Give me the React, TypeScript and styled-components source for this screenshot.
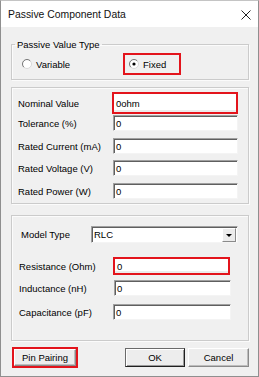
import styled, { createGlobalStyle } from 'styled-components';

const GlobalStyle = createGlobalStyle`
	html, body {
		margin: 0;
		padding: 0;
		background: #ffffff;
	}
	* {
		box-sizing: border-box;
	}
`;

const RED = '#e3141c';
const FONT = `'Liberation Sans', Arial, sans-serif`;

const Window = styled.div`
	width: 259px;
	height: 377px;
	display: flex;
	flex-direction: column;
	border: 1px solid #8f8f8f;
	border-top-color: #c4c4c4;
	font-family: ${FONT};
	font-size: 9.5px;
	color: #000;
	overflow: hidden;
`;

const TitleBar = styled.div`
	height: 26px;
	flex: none;
	display: flex;
	align-items: center;
	justify-content: space-between;
	padding: 0 7px 0 7px;
	background: #ffffff;
`;

const Title = styled.span`
	font-size: 10.4px;
	color: #111;
`;

const Close = styled.svg`
	width: 10px;
	height: 10px;
	margin-top: 1px;
`;

const Body = styled.div`
	flex: 1;
	display: flex;
	flex-direction: column;
	background: #f0f0f0;
	padding: 12px 9px 0 10px;
`;

const Group = styled.fieldset<{ $top?: number; $pad: string }>`
	margin: ${(p) => p.$top ?? 0}px 0 0 0;
	padding: ${(p) => p.$pad};
	min-inline-size: 0;
	border: 1px solid #cbcbcb;
	box-shadow: inset 1px 1px 0 #fbfbfb, 1px 1px 0 #fbfbfb;
`;

const Legend = styled.legend`
	margin-left: 3px;
	padding: 0 2px;
	line-height: 11px;
	height: 11px;
`;

const RadioRow = styled.div`
	display: flex;
	align-items: center;
	height: 22px;
`;

const Option = styled.label<{ $w: number; $flag?: boolean }>`
	display: flex;
	align-items: center;
	gap: 4px;
	width: ${(p) => p.$w}px;
	height: 22px;
	padding-left: ${(p) => (p.$flag ? 4 : 10)}px;
	border: ${(p) => (p.$flag ? `2px solid ${RED}` : 'none')};
`;

const Row = styled.div<{ $top?: number }>`
	display: flex;
	align-items: center;
	margin-top: ${(p) => p.$top ?? 0}px;
`;

const Label = styled.span<{ $w: number; $indent?: number }>`
	width: ${(p) => p.$w}px;
	padding-left: ${(p) => p.$indent ?? 0}px;
	flex: none;
	white-space: nowrap;
`;

const Field = styled.div<{ $w: number; $h?: number; $flag?: boolean; $shift?: number }>`
	width: ${(p) => p.$w}px;
	height: ${(p) => p.$h ?? 16}px;
	margin-left: ${(p) => p.$shift ?? 0}px;
	display: flex;
	align-items: center;
	padding-left: 2px;
	background: #ffffff;
	border: ${(p) => (p.$flag ? `2px solid ${RED}` : '1px solid')};
	border-color: ${(p) => (p.$flag ? RED : '#a0a0a0 #f4f4f4 #f4f4f4 #a0a0a0')};
	box-shadow: ${(p) => (p.$flag ? 'inset 0 -2px 0 #ececec' : 'inset 1px 1px 0 #5f5f5f')};
`;

const Select = styled(Field)`
	padding-right: 1px;
	justify-content: space-between;
`;

const DropButton = styled.span`
	width: 14px;
	height: 14px;
	display: flex;
	align-items: center;
	justify-content: center;
	background: #ececec;
	border: 1px solid;
	border-color: #ffffff #8a8a8a #8a8a8a #ffffff;
`;

const Arrow = styled.span`
	width: 0;
	height: 0;
	border-left: 3px solid transparent;
	border-right: 3px solid transparent;
	border-top: 3px solid #000;
	margin-top: 1px;
`;

const ButtonRow = styled.div`
	display: flex;
	align-items: flex-start;
	margin-top: 6px;
`;

const Flag = styled.div`
	margin-left: 1px;
	border: 2px solid ${RED};
	width: 66px;
	height: 21px;
`;

const Button = styled.button<{ $w: number; $h?: number; $left?: number; $default?: boolean }>`
	width: ${(p) => p.$w}px;
	height: ${(p) => p.$h ?? 17}px;
	margin: ${(p) => (p.$h ? 1 : 0)}px 0 0 ${(p) => p.$left ?? 0}px;
	padding: 0;
	font-family: ${FONT};
	font-size: 9.5px;
	color: #000;
	background: #ededed;
	border: 1px solid;
	border-color: ${(p) => (p.$default ? '#6a6a6a #202020 #202020 #6a6a6a' : '#ffffff #8a8a8a #8a8a8a #ffffff')};
	box-shadow: ${(p) => (p.$default ? 'inset 1px 1px 0 #ffffff, inset -1px -1px 0 #9a9a9a' : 'inset -1px -1px 0 #bdbdbd')};
`;

const Spacer = styled.div`
	flex: 1;
`;

function Radio({ checked }: { checked?: boolean }) {
	return (
		<svg width="10" height="10" viewBox="0 0 10 10">
			<circle cx="5" cy="5" r="4.5" fill="#fff" stroke="#d8d8d8" />
			<path d="M1.8 8.2 A4.5 4.5 0 0 1 8.2 1.8" fill="none" stroke="#7a7a7a" />
			{checked && <circle cx="5" cy="5" r="1.6" fill="#000" />}
		</svg>
	);
}

const mainRows = [
	{ label: 'Tolerance (%)', value: '0', top: 1 },
	{ label: 'Rated Current (mA)', value: '0', top: 7 },
	{ label: 'Rated Voltage (V)', value: '0', top: 6 },
	{ label: 'Rated Power (W)', value: '0', top: 7 },
];

function App() {
	return (
		<>
			<GlobalStyle />
			<Window>
				<TitleBar>
					<Title>Passive Component Data</Title>
					<Close viewBox="0 0 10 10">
						<path d="M0.5 0.5 L9.5 9.5 M9.5 0.5 L0.5 9.5" stroke="#222" strokeWidth="1" />
					</Close>
				</TitleBar>
				<Body>
					<Group $pad="3px 0 4px 0">
						<Legend>Passive Value Type</Legend>
						<RadioRow>
							<Option $w={111}>
								<Radio />
								Variable
							</Option>
							<Option $w={58} $flag>
								<Radio checked />
								Fixed
							</Option>
						</RadioRow>
					</Group>

					<Group $top={7} $pad="4px 9px 4px 6px">
						<Row>
							<Label $w={95}>Nominal Value</Label>
							<Field $w={126} $h={22} $flag $shift={-1}>
								0ohm
							</Field>
						</Row>
						{mainRows.map((r) => (
							<Row key={r.label} $top={r.top}>
								<Label $w={95}>{r.label}</Label>
								<Field $w={125}>{r.value}</Field>
							</Row>
						))}
					</Group>

					<Group $top={11} $pad="10px 9px 20px 7px">
						<Row>
							<Label $w={72} $indent={2}>
								Model Type
							</Label>
							<Select $w={147} $h={17}>
								RLC
								<DropButton>
									<Arrow />
								</DropButton>
							</Select>
						</Row>
						<Row $top={14}>
							<Label $w={94}>Resistance (Ohm)</Label>
							<Field $w={117} $h={18} $flag>
								0
							</Field>
						</Row>
						<Row $top={5}>
							<Label $w={95}>Inductance (nH)</Label>
							<Field $w={117}>0</Field>
						</Row>
						<Row $top={8}>
							<Label $w={94}>Capacitance (pF)</Label>
							<Field $w={118}>0</Field>
						</Row>
					</Group>

					<ButtonRow>
						<Flag>
							<Button $w={62}>Pin Pairing</Button>
						</Flag>
						<Spacer />
						<Button $w={60} $h={19} $default>
							OK
						</Button>
						<Button $w={61} $h={19} $left={3}>
							Cancel
						</Button>
					</ButtonRow>
				</Body>
			</Window>
		</>
	);
}

export default App;
